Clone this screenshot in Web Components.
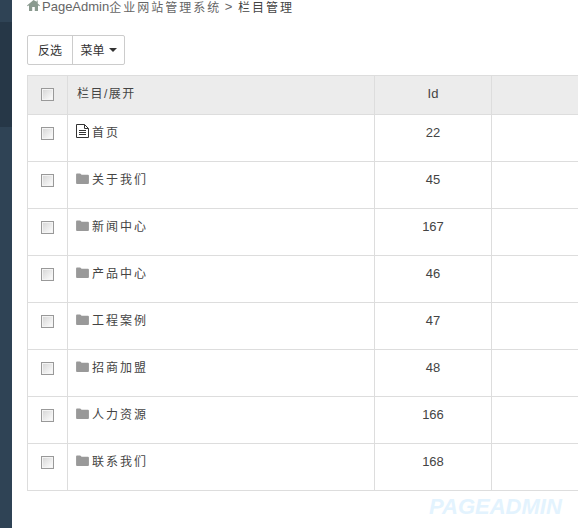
<!DOCTYPE html>
<html>
<head>
<meta charset="utf-8">
<style>
html, body { margin:0; padding:0; height:100%; overflow:hidden; background:#fff; }
body { font-family:"Liberation Sans","Noto Sans CJK SC",sans-serif; font-size:13px; color:#444; }
</style>
</head>
<body>
<admin-shell>
  <page-crumb>PageAdmin<span>企业网站管理系统</span> &gt; <b>栏目管理</b></page-crumb>
  <btn-bar></btn-bar>
  <column-table id="table"></column-table>
  <water-mark>PAGEADMIN</water-mark>
</admin-shell>
<script>
class AdminShell extends HTMLElement {
  connectedCallback() {
    const root = this.attachShadow({ mode: "open" })
    root.innerHTML = `
      <style>
        :host { display:flex; height:528px; overflow:hidden; position:relative; }
        .side { width:12px; flex:none; background:linear-gradient(#2f4355 0, #2f4355 22px, #263747 22px, #263747 127px, #2f4355 127px); }
        .main { flex:1; min-width:0; padding-left:15px; }
      </style>
      <div class="side"></div>
      <div class="main"><slot></slot></div>`
  }
}
class PageCrumb extends HTMLElement {
  connectedCallback() {
    const root = this.attachShadow({ mode: "open" })
    root.innerHTML = `
      <style>
        :host { display:flex; align-items:center; height:12px; color:#666; font-size:13px; white-space:pre; }
        svg { width:13px; height:12px; margin-right:2px; flex:none; }
        ::slotted(span) { font-size:12px; letter-spacing:2px; }
        ::slotted(b) { font-weight:normal; font-size:12px; letter-spacing:2px; color:#444; margin-left:2px; }
      </style>
      <svg viewBox="0 0 13 12"><path d="M6.500 0 0 5.500l.8.8L2 5.300V11h3.200V7h2.600v4H11V5.300l1.200 1 .8-.8-2.300-2V.5H9.800v1.200z" fill="#8a9a8f"/></svg>
      <slot></slot>`
  }
}
class BtnBar extends HTMLElement {
  connectedCallback() {
    const root = this.attachShadow({ mode: "open" })
    root.innerHTML = `
      <style>
        :host { display:flex; margin-top:23px; width:98px; height:30px; box-sizing:border-box; border:1px solid #ccc; border-radius:2px; color:#333; font-size:12px; }
        div { display:flex; align-items:center; justify-content:center; padding-bottom:2px; }
        .a { width:45px; box-sizing:border-box; border-right:1px solid #ccc; }
        .b { flex:1; gap:4px; }
        i { width:0; height:0; border:4px solid transparent; border-top-color:#333; border-bottom:0; margin-top:2px; }
      </style>
      <div class="a">反选</div><div class="b">菜单<i></i></div>`
  }
}
class ColumnTable extends HTMLElement {
  connectedCallback() {
    const rows = [["file","首页","22"],["folder","关于我们","45"],["folder","新闻中心","167"],["folder","产品中心","46"],["folder","工程案例","47"],["folder","招商加盟","48"],["folder","人力资源","166"],["folder","联系我们","168"]]
    const icons = {
      file: `<svg viewBox="0 0 13 14" style="width:13px;height:14px;margin:1px 3px 0 0"><path d="M.5.5h8l4 4v9H.5z" fill="#fff" stroke="#333"/><path d="M8.500.5v4h4M3 6.500h7M3 8.500h7M3 10.500h7" fill="none" stroke="#333"/></svg>`,
      folder: `<svg viewBox="0 0 14 12" style="width:13px;height:11px;margin:3px 3px 0 0"><path d="M0 1.500q0-1 1-1h3.500l1.500 1.500h7q1 0 1 1v8q0 1-1 1H1q-1 0-1-1z" fill="#999"/></svg>`
    }
    const root = this.attachShadow({ mode: "open" })
    root.innerHTML = `
      <style>
        :host { display:block; margin-top:10px; width:560px; }
        .row { display:grid; grid-template-columns:40px 307px 117px 1fr; height:47px; box-sizing:border-box; border-bottom:1px solid #ddd; }
        .head { height:40px; background:#ececec; border-top:1px solid #ddd; }
        .row > div { border-left:1px solid #ddd; padding-top:10px; box-sizing:border-box; }
        .check { display:flex; justify-content:center; }
        .check span { width:13px; height:13px; box-sizing:border-box; border:1px solid #999; background:linear-gradient(135deg,#d4d4d4,#fff); box-shadow:inset 0 0 0 1px #f4f4f4; margin-top:2px; }
        .row > .name { padding:8px 0 0 8px; display:flex; align-items:flex-start; letter-spacing:2px; font-size:12px; color:#444; }
        .head > .name { padding-left:9px; letter-spacing:1.5px; }
        .name svg { flex:none; }
        .id { text-align:center; color:#444; }
      </style>
      <div class="row head">
        <div class="check"><span></span></div>
        <div class="name">栏目/展开</div>
        <div class="id">Id</div>
        <div></div>
      </div>
      ${rows.map(([icon, name, id]) => `
      <div class="row">
        <div class="check"><span></span></div>
        <div class="name">${icons[icon]}<span>${name}</span></div>
        <div class="id">${id}</div>
        <div></div>
      </div>`).join("")}`
  }
}
class WaterMark extends HTMLElement {
  connectedCallback() {
    const root = this.attachShadow({ mode: "open" })
    root.innerHTML = `
      <style>
        :host { position:absolute; left:429px; top:494px; color:#e3f3fe; font:italic bold 22px "Liberation Sans",sans-serif; }
      </style>
      <slot></slot>`
  }
}
customElements.define("admin-shell", AdminShell)
customElements.define("page-crumb", PageCrumb)
customElements.define("btn-bar", BtnBar)
customElements.define("column-table", ColumnTable)
customElements.define("water-mark", WaterMark)
</script>
</body>
</html>
